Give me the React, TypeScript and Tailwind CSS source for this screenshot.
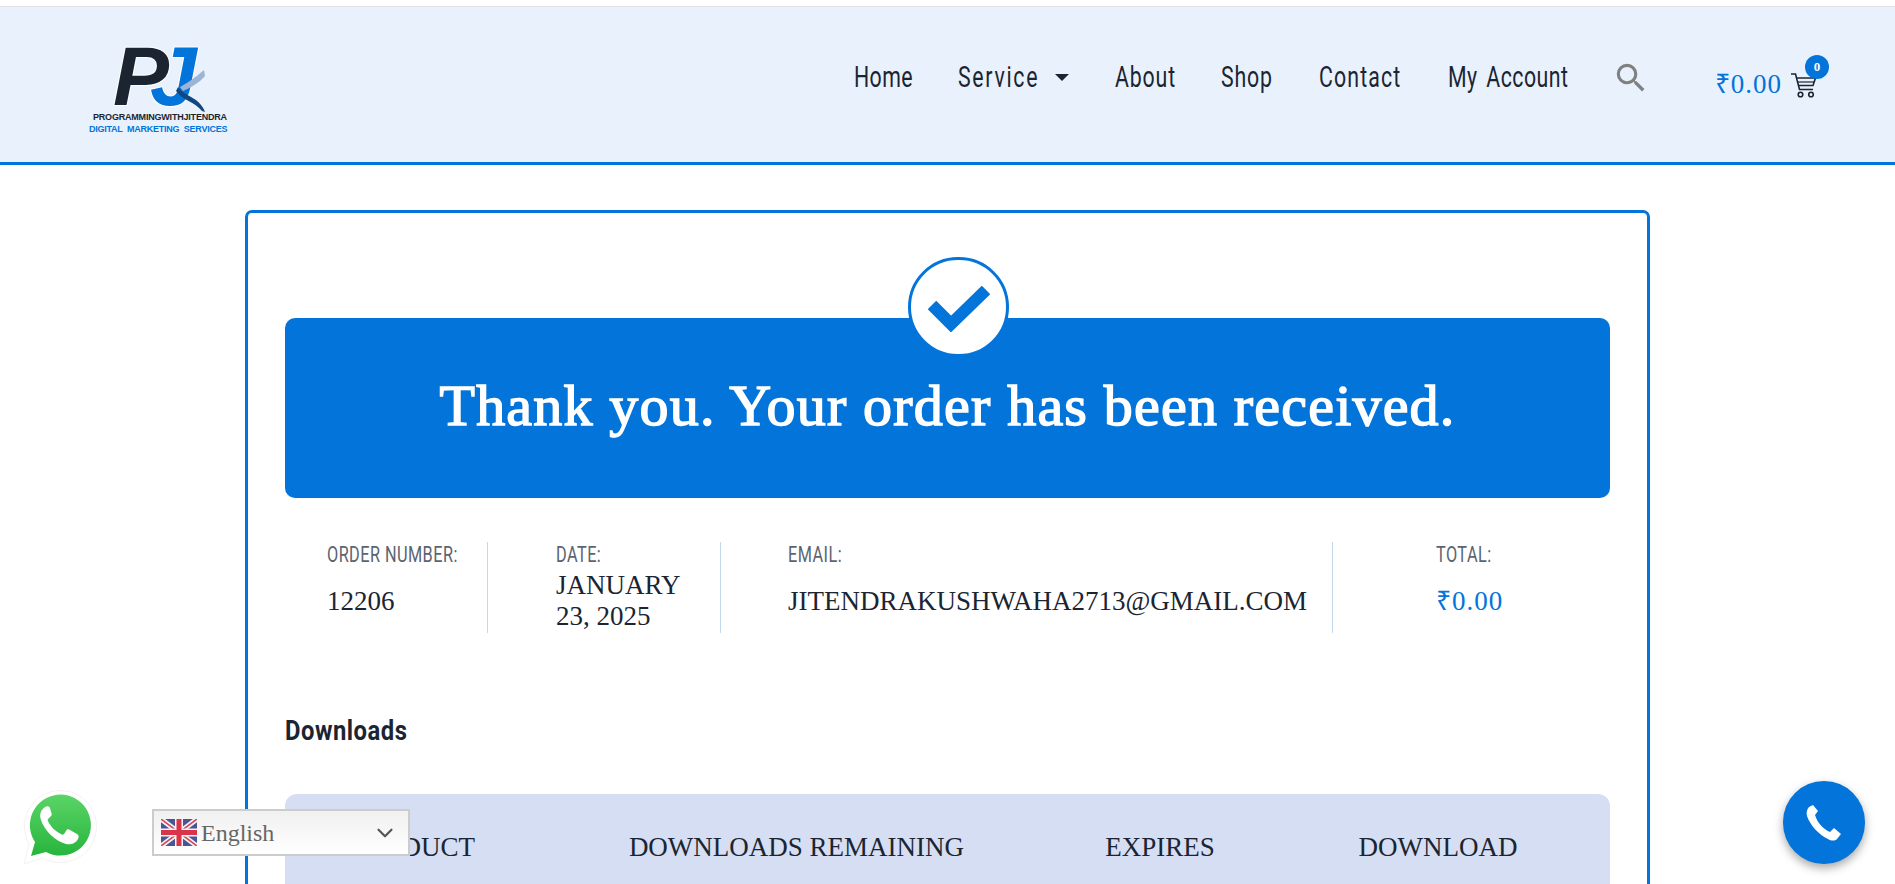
import React from 'react';
import { ChevronDown } from 'lucide-react';
import { MdSearch } from 'react-icons/md';

const navItems = [
  { name: 'Home', width: 'w-[58px]', track: 'tracking-[0.6px]' },
  { name: 'Service', width: 'w-[82px]', track: 'tracking-[2.4px]' },
  { name: 'About', width: 'w-[60px]', track: 'tracking-[1.2px]' },
  { name: 'Shop', width: 'w-[52px]', track: 'tracking-[1.2px]' },
  { name: 'Contact', width: 'w-[83px]', track: 'tracking-[1.6px]' },
  { name: 'My Account', width: 'w-[121px]', track: 'tracking-[0.7px]' },
];

const stats = [
  { label: 'ORDER NUMBER:', value: '12206', cell: 'w-[202px] pl-[42px]', blue: false },
  { label: 'DATE:', value: 'JANUARY 23, 2025', cell: 'w-[233px] pl-[68px] pr-[32px] border-l', blue: false },
  { label: 'EMAIL:', value: 'JITENDRAKUSHWAHA2713@GMAIL.COM', cell: 'w-[612px] pl-[67px] border-l', blue: false },
  { label: 'TOTAL:', value: '₹0.00', cell: 'flex-1 pl-[103px] border-l', blue: true },
];

// la fuente condensada no existe aqui, se estrecha Roboto
const Narrow = ({ width, track, children }: { width: string; track: string; children: React.ReactNode }) => (
  <span className={`inline-block ${width} ${track} whitespace-nowrap [word-spacing:4px]`}>
    <span className="inline-block origin-left scale-x-[0.71]">{children}</span>
  </span>
);

const Logo = () => (
  <div className="relative w-[140px] h-[92px]">
    <svg viewBox="0 0 140 66" className="absolute left-0 top-0 w-[140px] h-[66px] overflow-visible">
      <text x="24" y="60" fontFamily="Liberation Sans" fontWeight="700" fontStyle="italic" fontSize="84" stroke="#ffffff" strokeWidth="2" paintOrder="stroke">
        <tspan fill="#1b2532">P</tspan>
        <tspan fill="#0274da" dx="-19">J</tspan>
      </text>
      <path d="M91 42c7-4 15-9 24-17l1 6c-6 7-15 12-22 15z" fill="#9db4d6" />
      <path d="M89 42c5 9 22 10 27 25l-3-1c-7-9-20-11-26-20z" fill="#13457f" />
    </svg>
    <div className="absolute left-[4px] top-[67px] whitespace-nowrap font-['Liberation_Sans'] text-[9px] leading-[11px] font-bold text-[#1b2532] tracking-[-0.2px]">PROGRAMMINGWITHJITENDRA</div>
    <div className="absolute left-0 top-[79px] whitespace-nowrap font-['Liberation_Sans'] text-[9px] leading-[11px] font-bold text-[#0274da] tracking-[-0.25px]">DIGITAL&nbsp; MARKETING&nbsp; SERVICES</div>
  </div>
);

const UkFlag = () => (
  <svg viewBox="0 0 36 27" className="w-[36px] h-[27px] shrink-0">
    <rect width="36" height="27" fill="#4a5694" />
    <path d="M0 0L36 27M36 0L0 27" stroke="#f3f3f3" strokeWidth="5" />
    <path d="M0 0L36 27M36 0L0 27" stroke="#d8455a" strokeWidth="1.6" />
    <path d="M18 0V27M0 13.5H36" stroke="#f3f3f3" strokeWidth="8" />
    <path d="M18 0V27M0 13.5H36" stroke="#d8344a" strokeWidth="5" />
  </svg>
);

const WhatsApp = () => (
  <svg viewBox="0 0 74 74" className="w-[74px] h-[74px]">
    <defs>
      <linearGradient id="wa" x1="0" y1="0" x2="0" y2="1">
        <stop offset="0" stopColor="#5bd467" />
        <stop offset="1" stopColor="#27b53c" />
      </linearGradient>
    </defs>
    <path d="M1 74l5-20A36 36 0 1 1 20 68z" fill="#ffffff" stroke="#f2f2f2" strokeWidth="1" />
    <path d="M8 66l4-14A30.5 30.5 0 1 1 23 62z" fill="url(#wa)" />
    <path d="M27 18c-1-2-3-2-5-1-4 3-6 7-4 13 3 10 14 21 25 24 6 1 10-1 12-5 1-2 1-4-1-5l-7-4c-2-1-3-1-4 1l-2 3c-1 1-2 1-3 0-5-2-11-8-13-13-1-1 0-2 1-3l2-2c1-1 1-2 0-4z" fill="#ffffff" />
  </svg>
);

const CartIcon = () => (
  <svg viewBox="0 0 28 28" className="w-[28px] h-[28px]">
    <path d="M1 3h4.500l4 15.500h13.500" fill="none" stroke="#1b2532" strokeWidth="1.6" />
    <path d="M6.500 7h19l-2.500 7.500h-14.500" fill="none" stroke="#1b2532" strokeWidth="1.6" />
    <path d="M8 11h16" stroke="#1b2532" strokeWidth="1.2" />
    <circle cx="10.500" cy="23.500" r="2.300" fill="none" stroke="#1b2532" strokeWidth="1.600" />
    <circle cx="21" cy="23.500" r="2.300" fill="none" stroke="#1b2532" strokeWidth="1.600" />
  </svg>
);

export default function App() {
  return (
    <div className="relative h-screen overflow-hidden bg-white font-['Liberation_Serif',serif]">
      {/* Cabecera */}
      <div className="h-[7px] border-b border-[#e2e2e2]"></div>
      <header className="h-[158px] bg-[#e9f2fc] border-b-[3px] border-[#0274da] flex items-center pl-[89px] pr-[77px]">
        <div className="mt-[13px]"><Logo /></div>
        <nav className="ml-auto flex items-center gap-[46px] mb-[15px] font-['Roboto',sans-serif] text-[30px] leading-[36px] text-[#1b2532]">
          {navItems.map((item) => (
            <span key={item.name} className="flex items-center">
              <Narrow width={item.width} track={item.track}>{item.name}</Narrow>
              {item.name === 'Service' && (
                <span className="ml-[15px] w-0 h-0 border-x-[7px] border-x-transparent border-t-[7px] border-t-[#1b2532]"></span>
              )}
            </span>
          ))}
        </nav>
        <MdSearch className="ml-[43px] mb-[14px] text-[38px] text-[#808080]" />
        <div className="ml-[65px] text-[27px] tracking-[1px] text-[#0274da] whitespace-nowrap">₹0.00</div>
        <div className="relative ml-[8px]">
          <CartIcon />
          <span className="absolute -right-[11px] -top-[16px] w-[24px] h-[24px] rounded-full bg-[#0274da] text-white text-[13px] font-bold flex items-center justify-center">0</span>
        </div>
      </header>

      {/* Tarjeta del pedido */}
      <main className="mt-[45px] ml-[245px] w-[1405px] rounded-[7px] border-[3px] border-[#0274da] px-[37px] pt-[105px] h-[800px]">
        <div className="relative h-[180px] rounded-[10px] bg-[#0274da] flex items-center justify-center pb-[5px]">
          <div className="absolute left-[623px] -top-[61px] w-[101px] h-[100px] rounded-full bg-white border-[3px] border-[#0274da] flex items-center justify-center">
            <svg viewBox="0 0 62 46" className="w-[62px] h-[46px] mt-[3px]">
              <path d="M4 19L23 38L58 4" fill="none" stroke="#0274da" strokeWidth="12" strokeLinejoin="miter" />
            </svg>
          </div>
          <h1 className="text-[58px] leading-none text-white whitespace-nowrap tracking-[1.2px] [-webkit-text-stroke:1.5px_white]">Thank you. Your order has been received.</h1>
        </div>

        <div className="mt-[44px] flex h-[91px]">
          {stats.map((s) => (
            <div key={s.label} className={`${s.cell} border-[#c3d9ee] flex flex-col`}>
              <div className="pt-[1px] font-['Roboto',sans-serif] text-[22px] leading-[24px] tracking-[0.6px] text-[#5c6470] whitespace-nowrap">
                <span className="inline-block origin-left scale-x-[0.74]">{s.label}</span>
              </div>
              <div className={`flex-1 flex items-center pt-[2px] text-[27px] leading-[31px] ${s.blue ? 'text-[#0274da] tracking-[1px]' : 'text-[#1b2532]'}`}>
                <span className={s.label === 'EMAIL:' ? 'whitespace-nowrap' : ''}>{s.value}</span>
              </div>
            </div>
          ))}
        </div>

        <h2 className="mt-[80px] font-['Roboto',sans-serif] text-[28px] leading-[36px] font-bold text-[#1b2532] tracking-[0.6px] whitespace-nowrap">
          <span className="inline-block origin-left scale-x-[0.85]">Downloads</span>
        </h2>

        <div className="mt-[45px] rounded-t-[12px] bg-[#d5def2] h-[200px] grid grid-cols-[254px_515px_212px_344px] pt-[37px] text-[27px] leading-[32px] text-[#1b2532] text-center">
          <div>PRODUCT</div>
          <div>DOWNLOADS REMAINING</div>
          <div>EXPIRES</div>
          <div>DOWNLOAD</div>
        </div>
      </main>

      {/* Flotantes */}
      <div className="fixed left-[23px] top-[790px]"><WhatsApp /></div>
      <div className="fixed left-[152px] top-[809px] w-[258px] h-[47px] border-2 border-[#cccccc] bg-gradient-to-b from-[#f0f0f0] to-white flex items-center pl-[7px] pr-[10px]">
        <UkFlag />
        <span className="ml-[4px] text-[24px] text-[#666666]">English</span>
        <ChevronDown className="ml-auto w-[26px] h-[26px] text-[#555555]" strokeWidth={2} />
      </div>
      <div className="fixed left-[1783px] top-[781px] w-[82px] h-[83px] rounded-full bg-[#0274da] shadow-[0_4px_10px_rgba(0,0,0,0.35)] flex items-center justify-center">
        <svg viewBox="0 0 40 40" className="w-[40px] h-[40px]">
          <path d="M9 2l5 6-3 4c2 7 8 14 15 17l4-4 7 6-4 5c-2 2-6 2-9 0C15 32 6 22 3 13 2 10 3 6 5 4z" fill="#ffffff" />
        </svg>
      </div>
    </div>
  );
}
